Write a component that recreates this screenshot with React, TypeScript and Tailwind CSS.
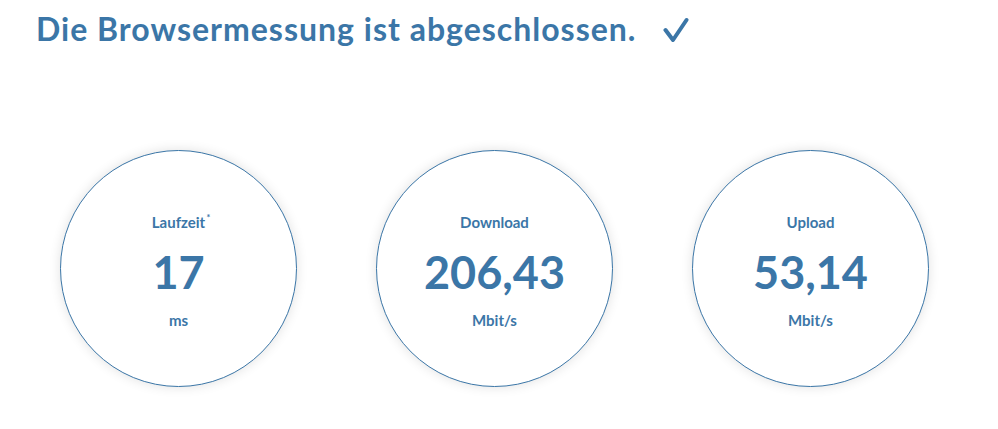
import React from "react";

const RESULTS = [
  { label: "Laufzeit", star: true, value: "17", unit: "ms" },
  { label: "Download", star: false, value: "206,43", unit: "Mbit/s" },
  { label: "Upload", star: false, value: "53,14", unit: "Mbit/s" },
];

function Check() {
  return (
    <svg width="26" height="26" viewBox="0 0 26 26" fill="none" className="ml-[27px] mt-[2px]">
      <polyline
        points="2.5,13 10,23 23.5,3"
        stroke="#3b76a7"
        strokeWidth="4"
        strokeLinecap="round"
        strokeLinejoin="round"
      />
    </svg>
  );
}

export default function App() {
  return (
    <div className="min-h-screen w-[998px] bg-white text-[#3b76a7]" style={{ fontFamily: "Lato, 'Noto Sans', sans-serif" }}>
      {/* Heading */}
      <div className="flex items-center pl-[36px] pt-[9px]">
        <h1 className="text-[32px] font-bold leading-[40px] tracking-[1px]">Die Browsermessung ist abgeschlossen.</h1>
        <Check />
      </div>

      {/* Result circles */}
      <div className="flex gap-[79px] pl-[60px] pt-[101px]">
        {RESULTS.map(r => (
          <div
            key={r.label}
            className="w-[237px] h-[237px] rounded-full border border-[#3b76a7] bg-white shadow-[0_0_12px_rgba(0,0,0,0.12)] flex flex-col items-center"
          >
            <div className="mt-[62px] text-[15px] font-bold leading-[18px] relative">
              {r.label}
              {r.star && <span className="absolute -right-[5px] -top-[4px] text-[9px]">*</span>}
            </div>
            <div className="mt-[13px] text-[45px] font-bold leading-[56px]">{r.value}</div>
            <div className="mt-[11px] text-[15px] font-bold leading-[18px]">{r.unit}</div>
          </div>
        ))}
      </div>
    </div>
  );
}
